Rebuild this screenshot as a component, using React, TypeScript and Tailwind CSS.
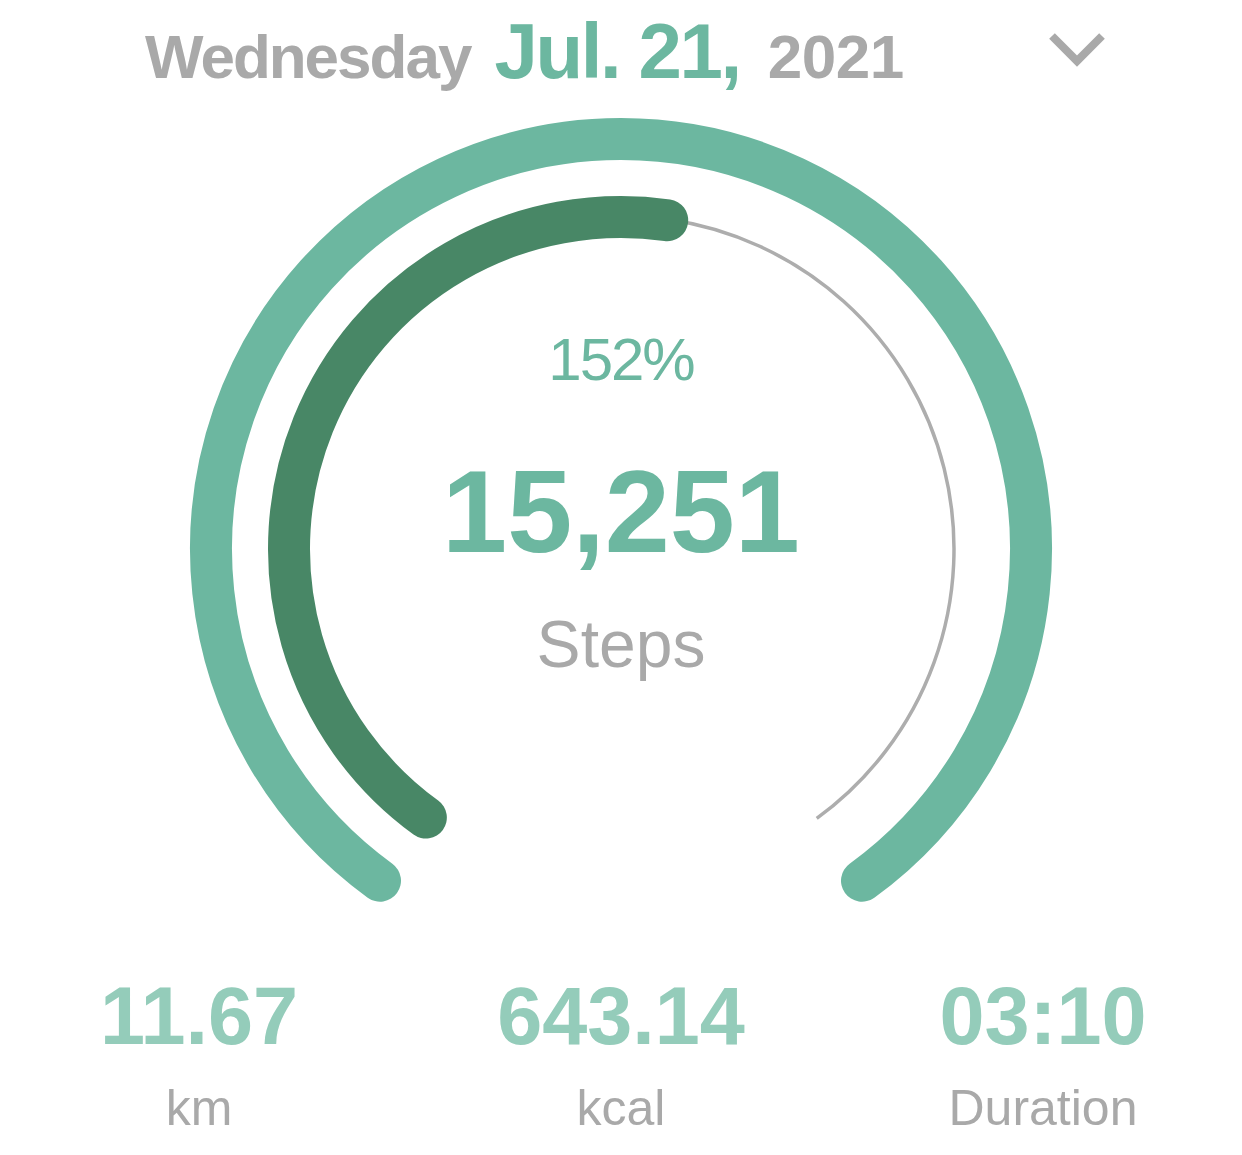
const font = { fontFamily: '"Liberation Sans", Arial, sans-serif' };

const CX = 621;
const CY = 449;

// angle measured clockwise from 12 o'clock
const pt = (deg: number, r: number) => {
  const a = (deg * Math.PI) / 180;
  return [CX + r * Math.sin(a), CY - r * Math.cos(a)];
};

const arc = (from: number, to: number, r: number) => {
  const [x1, y1] = pt(from, r);
  const [x2, y2] = pt(to, r);
  const large = to - from > 180 ? 1 : 0;
  return `M ${x1} ${y1} A ${r} ${r} 0 ${large} 1 ${x2} ${y2}`;
};

const Stat = ({ value, label }: { value: string; label: string }) => (
  <div className="flex w-[300px] flex-col items-center">
    <div className="text-[81px] font-bold leading-none text-[#94ccba]">{value}</div>
    <div className="mt-[26px] text-[50px] leading-none text-[#a9a9a9]">{label}</div>
  </div>
);

export default function App() {
  return (
    <div className="h-[1155px] w-[1242px] overflow-hidden bg-white" style={font}>
      <div className="flex h-[100px] items-start pl-[145px] pr-[133px] pt-[12px]">
        <div className="flex items-baseline font-bold leading-none">
          <span className="text-[62px] tracking-[-2px] text-[#a9a9a9]">Wednesday</span>
          <span className="ml-[24px] text-[78px] tracking-[-2.4px] text-[#6cb7a0]">Jul. 21,</span>
          <span className="ml-[28px] text-[62px] tracking-[-0.5px] text-[#a9a9a9]">2021</span>
        </div>
        <svg className="ml-auto mt-[16px]" width="64" height="44" viewBox="0 0 64 44">
          <polyline
            points="7,8 32,33 57,8"
            fill="none"
            stroke="#a9a9a9"
            strokeWidth="8"
            strokeLinecap="butt"
            strokeLinejoin="miter"
          />
        </svg>
      </div>

      <div className="relative h-[876px]">
        <svg width="1242" height="876" viewBox="0 0 1242 876">
          <path d={arc(-144, 144, 410)} fill="none" stroke="#6cb7a0" strokeWidth="42" strokeLinecap="round" />
          <path d={arc(8, 144, 333)} fill="none" stroke="#adadad" strokeWidth="3.5" />
          <path d={arc(-144, 8, 332)} fill="none" stroke="#488766" strokeWidth="42" strokeLinecap="round" />
        </svg>
        <div className="absolute inset-x-0 top-[230px] flex flex-col items-center leading-none">
          <div className="text-[60px] tracking-[-2px] text-[#6cb7a0]">152%</div>
          <div className="mt-[63px] text-[117px] font-bold text-[#6cb7a0]">15,251</div>
          <div className="mt-[41px] text-[66px] text-[#a9a9a9]">Steps</div>
        </div>
      </div>

      <div className="flex justify-center gap-[122px]">
        <Stat value="11.67" label="km" />
        <Stat value="643.14" label="kcal" />
        <Stat value="03:10" label="Duration" />
      </div>
    </div>
  );
}
